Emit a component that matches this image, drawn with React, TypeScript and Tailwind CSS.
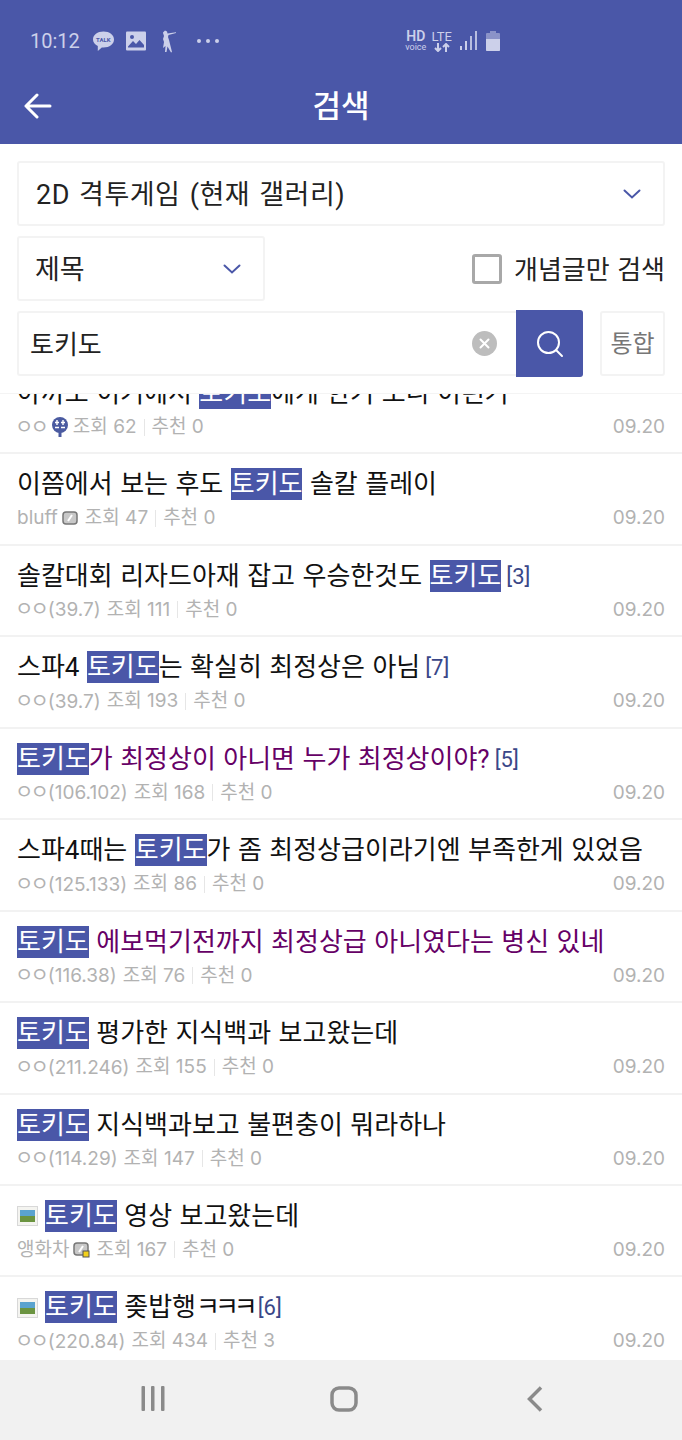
import React from "react";

type Row = {
  title: React.ReactNode;
  count?: number;
  nick: string;
  badge?: "flag" | "fixed" | "fixedLock";
  views: number;
  likes: number;
  visited?: boolean;
  image?: boolean;
};

const Hl = ({ children = "토키도" }: { children?: React.ReactNode }) => (
  <span className="bg-[#4a57a8] py-px text-white">{children}</span>
);

const rows: Row[] = [
  { title: <>아까도 이거에서 <Hl />에게 한거 보니 이런거</>, nick: "ㅇㅇ", badge: "flag", views: 62, likes: 0 },
  { title: <>이쯤에서 보는 후도 <Hl /> 솔칼 플레이</>, nick: "bluff", badge: "fixed", views: 47, likes: 0 },
  { title: <>솔칼대회 리자드아재 잡고 우승한것도 <Hl /></>, count: 3, nick: "ㅇㅇ(39.7)", views: 111, likes: 0 },
  { title: <>스파4 <Hl />는 확실히 최정상은 아님</>, count: 7, nick: "ㅇㅇ(39.7)", views: 193, likes: 0 },
  { title: <><Hl />가 최정상이 아니면 누가 최정상이야?</>, count: 5, nick: "ㅇㅇ(106.102)", views: 168, likes: 0, visited: true },
  { title: <>스파4때는 <Hl />가 좀 최정상급이라기엔 부족한게 있었음</>, nick: "ㅇㅇ(125.133)", views: 86, likes: 0 },
  { title: <><Hl /> 에보먹기전까지 최정상급 아니였다는 병신 있네</>, nick: "ㅇㅇ(116.38)", views: 76, likes: 0, visited: true },
  { title: <><Hl /> 평가한 지식백과 보고왔는데</>, nick: "ㅇㅇ(211.246)", views: 155, likes: 0 },
  { title: <><Hl /> 지식백과보고 불편충이 뭐라하나</>, nick: "ㅇㅇ(114.29)", views: 147, likes: 0 },
  { title: <><Hl /> 영상 보고왔는데</>, nick: "앵화차", badge: "fixedLock", views: 167, likes: 0, image: true },
  { title: <><Hl /> 좆밥행<span className="tracking-[-5px]">ㅋㅋㅋ</span></>, count: 6, nick: "ㅇㅇ(220.84)", views: 434, likes: 3, image: true },
];

const Chevron = () => (
  <svg width="18" height="10" viewBox="0 0 18 10" fill="none" stroke="#4a57a8" strokeWidth="2" strokeLinecap="round">
    <path d="M1.5 1.5 9 8.5l7.500-7" />
  </svg>
);

const Thumb = () => (
  <svg width="21" height="20" viewBox="0 0 21 20" className="mr-[7px] shrink-0">
    <rect x="0.5" y="0.5" width="20" height="19" fill="#f4f4f0" stroke="#d8d8d8" />
    <rect x="3" y="4" width="15" height="7" fill="#5aa3cf" />
    <rect x="3" y="10" width="15" height="6" fill="#6b9440" />
  </svg>
);

const Badge = ({ kind }: { kind: NonNullable<Row["badge"]> }) => {
  if (kind === "flag") {
    return (
      <svg width="16" height="21" viewBox="0 0 16 21" className="mr-[5px] ml-[4px]">
        <circle cx="8" cy="8" r="8" fill="#4a5aa0" />
        <path d="M8 15v5" stroke="#4a5aa0" strokeWidth="3" />
        <path d="M3 5.500h4M9 5.500h4M3 10.500h4M9 10.500h4M5 3v5M11 3v5" stroke="#fff" strokeWidth="1.400" />
      </svg>
    );
  }
  return (
    <svg width="17" height="17" viewBox="0 0 17 17" className="mr-[6px] ml-[4px]">
      <rect x="1" y="2" width="14" height="12" rx="3" fill="#c8c8c8" stroke="#777" strokeWidth="1.5" />
      <path d="M6 11 10 5" stroke="#fff" strokeWidth="2" />
      {kind === "fixedLock" && <rect x="10" y="10" width="6" height="6" fill="#f3d11c" stroke="#555" />}
    </svg>
  );
};

// the ㅇㅇ nick sits tight in the screenshot, so it gets its own tracking
const Nick = ({ nick }: { nick: string }) => {
  if (!nick.startsWith("ㅇㅇ")) return <span>{nick}</span>;
  return (
    <span>
      <span className="-ml-[2px] text-[20px] tracking-[-3px]">ㅇㅇ</span>
      <span className="ml-[2px]">{nick.slice(2)}</span>
    </span>
  );
};

const ListRow = ({ row, first }: { row: Row; first?: boolean }) => (
  <div className={`h-[91.45px] shrink-0 border-b-2 border-[#f2f2f2] px-[17px] pt-[14px] ${first ? "-mt-[31px]" : ""}`}>
    <div className={`flex h-[33px] items-center text-[26px] leading-[33px] whitespace-nowrap ${row.visited ? "text-[#660066]" : "text-[#111]"}`}>
      {row.image && <Thumb />}
      <span className="[word-spacing:1px]">{row.title}</span>
      {row.count !== undefined && (
        <span className="ml-[5px] text-[22px] text-[#3a4788]">[{row.count}]</span>
      )}
    </div>
    <div className="mt-[5px] flex h-[24px] items-center justify-between font-['Inter','Noto_Sans_CJK_KR',sans-serif] text-[19px] leading-[24px] text-[#b2b2b2]">
      <div className="flex items-center">
        <Nick nick={row.nick} />
        {row.badge ? <Badge kind={row.badge} /> : <span className="w-[6px]" />}
        <span>조회 {row.views}</span>
        <span className="mx-[7px] h-[17px] w-px bg-[#e6e6e6]" />
        <span>추천 {row.likes}</span>
      </div>
      <span>09.20</span>
    </div>
  </div>
);

export default function App() {
  return (
    <div className="flex h-[1440px] w-[682px] flex-col overflow-hidden bg-white font-['Roboto','Noto_Sans_CJK_KR',sans-serif]">
      <header className="h-[144px] shrink-0 bg-[#4a57a8]">
        <div className="flex h-[72px] items-center pt-[10px] pl-[30px] text-[#ccd0ea]">
          <span className="text-[20px] leading-none">10:12</span>
          <div className="relative ml-[12px] h-[21px] w-[23px]">
            <svg width="23" height="21" viewBox="0 0 23 21">
              <path d="M11.500 0.500C5.500 0.500 1 4 1 8.500c0 2.800 1.900 5.200 4.800 6.500L5.800 20l4-3.500h1.700C17.500 16.500 22 13 22 8.500S17.500 0.500 11.500 0.500Z" fill="#ccd0ea" />
            </svg>
            <span className="absolute top-[5px] left-0 w-[23px] text-center text-[6px] leading-[7px] font-bold text-[#4a57a8]">TALK</span>
          </div>
          <svg width="20" height="20" viewBox="0 0 20 20" className="ml-[11px]">
            <rect width="20" height="19" y="0.500" rx="1" fill="#ccd0ea" />
            <circle cx="6" cy="6" r="2" fill="#4a57a8" />
            <path d="M2 15.500 7 10l3 3 3.500-4L18 14v2.500H2Z" fill="#4a57a8" />
          </svg>
          <svg width="15" height="23" viewBox="0 0 15 23" className="ml-[15px]">
            <path d="M2 2.500 4 0.500l2 1 0.500 2L15 2.200v0.800L7.500 5 7 7l1 3 1 4 2 8-1 .5-3.500-6L5.500 22 4 22l0.500-6L2 18l1-6-1-3 1-3-1-3Z" fill="#ccd0ea" />
          </svg>
          <div className="ml-[21px] flex gap-[5px]">
            <span className="size-[4px] rounded-full bg-[#ccd0ea]" />
            <span className="size-[4px] rounded-full bg-[#ccd0ea]" />
            <span className="size-[4px] rounded-full bg-[#ccd0ea]" />
          </div>
          <div className="ml-[186px] flex items-center text-[#ccd0ea]">
            <div className="flex w-[22px] flex-col items-center gap-[2px]">
              <span className="text-[14px] leading-[11px] font-semibold">HD</span>
              <span className="text-[9px] leading-[7px]">voice</span>
            </div>
            <div className="ml-[5px] flex w-[20px] flex-col items-center">
              <span className="text-[13px] leading-[12px]">LTE</span>
              <svg width="16" height="9" viewBox="0 0 16 9" fill="none" stroke="#ccd0ea" strokeWidth="2">
                <path d="M4 0v8M1 5l3 3 3-3M12 9V1M9 4l3-3 3 3" />
              </svg>
            </div>
            <svg width="18" height="20" viewBox="0 0 18 20" className="ml-[8px]" fill="#ccd0ea">
              <rect x="0" y="15" width="2" height="4" />
              <rect x="5" y="10" width="2" height="9" />
              <rect x="10" y="5" width="2" height="14" opacity="0.85" />
              <rect x="15" y="0" width="2" height="19" opacity="0.85" />
            </svg>
            <svg width="14" height="20" viewBox="0 0 14 20" className="ml-[8px]">
              <path d="M4 0h6v2h3a1 1 0 0 1 1 1v16a1 1 0 0 1-1 1H1a1 1 0 0 1-1-1V3a1 1 0 0 1 1-1h3Z" fill="#8b93c8" />
              <path d="M0 8h14v11a1 1 0 0 1-1 1H1a1 1 0 0 1-1-1Z" fill="#ccd0ea" />
            </svg>
          </div>
        </div>
        <div className="relative flex h-[72px] items-center justify-center pb-[2px]">
          <svg width="28" height="26" viewBox="0 0 28 26" fill="none" stroke="#fff" strokeWidth="3" strokeLinecap="round" strokeLinejoin="round" className="absolute top-[21px] left-[24px]">
            <path d="M13 2 2 13l11 11M2 13h24" />
          </svg>
          <span className="text-[31px] font-medium text-white">검색</span>
        </div>
      </header>

      <section className="flex h-[250px] shrink-0 flex-col gap-[10px] border-b border-[#f4f4f4] px-[17px] pt-[17px]">
        <div className="flex h-[65px] items-center justify-between rounded-[3px] border-2 border-[#f3f3f3] pr-[22px] pl-[17px] text-[#222]">
          <span className="pt-[3px] text-[27px] tracking-[0.5px] [word-spacing:2px]">2D 격투게임 (현재 갤러리)</span>
          <Chevron />
        </div>
        <div className="flex h-[65px] items-center justify-between">
          <div className="flex h-[65px] w-[248px] items-center justify-between rounded-[3px] border-2 border-[#f3f3f3] pr-[22px] pl-[16px] text-[#222]">
            <span className="pt-[3px] text-[27px]">제목</span>
            <Chevron />
          </div>
          <div className="flex items-center">
            <span className="size-[30px] rounded-[3px] border-[3px] border-[#a8a8a8]" />
            <span className="ml-[12px] pt-[3px] text-[26px] text-[#222] [word-spacing:1px]">개념글만 검색</span>
          </div>
        </div>
        <div className="flex h-[65px] items-center">
          <div className="flex h-[65px] w-[499px] items-center justify-between rounded-l-[3px] border-2 border-r-0 border-[#f3f3f3] pr-[19px] pl-[11px] text-[#222]">
            <span className="pt-[3px] text-[26px]">토키도</span>
            <svg width="25" height="25" viewBox="0 0 25 25">
              <circle cx="12.500" cy="12.500" r="12.500" fill="#bdbdbd" />
              <path d="M8.500 8.500l8 8M16.500 8.500l-8 8" stroke="#fff" strokeWidth="2" strokeLinecap="round" />
            </svg>
          </div>
          <button className="flex h-[67px] w-[67px] items-center justify-center rounded-r-[3px] bg-[#4a57a8]">
            <svg width="28" height="28" viewBox="0 0 28 28" fill="none" stroke="#fff" strokeWidth="2" strokeLinecap="round">
              <circle cx="12.500" cy="12.500" r="10.500" />
              <path d="m20 20 6 6" />
            </svg>
          </button>
          <div className="ml-[17px] flex h-[65px] w-[65px] items-center justify-center rounded-[3px] border-2 border-[#f3f3f3] text-[24px] text-[#777]">
            통합
          </div>
        </div>
      </section>

      <main className="flex min-h-0 flex-1 flex-col overflow-hidden">
        {rows.map((row, i) => (
          <ListRow key={i} row={row} first={i === 0} />
        ))}
      </main>

      <nav className="flex h-[80px] shrink-0 items-center bg-[#f1f1f1] pb-[2px]">
        <div className="flex w-[306px] justify-center">
          <svg width="24" height="26" viewBox="0 0 24 26" fill="#8a8a8a">
            <rect x="0.500" width="3.500" height="25" rx="1" />
            <rect x="10" width="3.500" height="25" rx="1" />
            <rect x="20" width="3.500" height="25" rx="1" />
          </svg>
        </div>
        <div className="flex w-[76px] justify-center">
          <svg width="28" height="26" viewBox="0 0 28 26" fill="none" stroke="#8a8a8a" strokeWidth="3.500">
            <rect x="2" y="2" width="24" height="22" rx="7" />
          </svg>
        </div>
        <div className="ml-[145px] flex justify-center">
          <svg width="16" height="26" viewBox="0 0 16 26" fill="none" stroke="#8a8a8a" strokeWidth="3.500">
            <path d="M14 1.500 2.500 13 14 24.500" />
          </svg>
        </div>
      </nav>
    </div>
  );
}
